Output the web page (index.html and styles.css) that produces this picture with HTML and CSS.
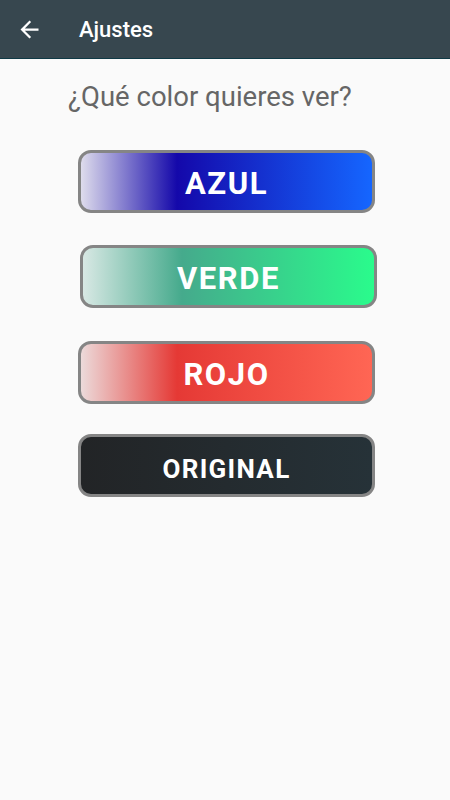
FILE: index.html
```html
<!DOCTYPE html>
<html lang="es">
<head>
  <meta charset="UTF-8" />
  <meta name="viewport" content="width=device-width, initial-scale=1.0" />
  <title>Ajustes</title>
  <link rel="stylesheet" href="styles.css">
</head>
<body>
  <header class="toolbar">
    <button class="back" aria-label="Volver">
      <svg viewBox="0 0 24 24" width="27" height="27">
        <path fill="#fff" d="M20 11H7.83l5.59-5.59L12 4l-8 8 8 8 1.41-1.41L7.83 13H20v-2z"/>
      </svg>
    </button>
    <h1 class="title">Ajustes</h1>
  </header>

  <p class="question">¿Qué color quieres ver?</p>

  <div class="options">
    <button class="option azul">AZUL</button>
    <button class="option verde">VERDE</button>
    <button class="option rojo">ROJO</button>
    <button class="option original">ORIGINAL</button>
  </div>
</body>
</html>
```

FILE: styles.css
```css
body {
  margin: 0;
  font-family: Roboto, "Liberation Sans", sans-serif;
  background-color: #fafafa;
  color: #333;
}

.toolbar {
  display: flex;
  align-items: center;
  height: 58px;
  padding-left: 16px;
  background-color: #37474f;
  border-bottom: 1px solid #0f3a46;
}

.back {
  display: flex;
  padding: 0;
  border: none;
  background: transparent;
  cursor: pointer;
}

.title {
  margin: 0 0 0 36px;
  font-size: 22px;
  font-weight: 500;
  color: #fff;
}

.question {
  margin: 0;
  padding: 22px 0 0 68px;
  font-size: 27.5px;
  line-height: 32px;
  color: #666;
}

.options {
  display: flex;
  flex-direction: column;
  align-items: center;
  gap: 32px;
  margin-top: 37px;
  padding-left: 3px;
}

.option {
  width: 297px;
  height: 63px;
  box-sizing: border-box;
  padding-top: 4px;
  border: 3px solid #858585;
  border-radius: 13px;
  font-family: Roboto, "Liberation Sans", sans-serif;
  font-size: 31px;
  font-weight: bold;
  letter-spacing: 0.05em;
  color: #fff;
  cursor: pointer;
}

.azul {
  background: linear-gradient(to right, #dedcec 0%, #1408aa 33%, #1566ff 100%);
}

.verde {
  margin-left: 4px;
  background: linear-gradient(to right, #d8e8e4 0%, #45aa8c 34%, #2afb8c 100%);
}

.rojo {
  margin-top: 1px;
  background: linear-gradient(to right, #ecdada 0%, #e53935 33%, #ff6654 100%);
}

.original {
  margin-top: -2px;
  padding-top: 8px;
  font-size: 26px;
  background: linear-gradient(to right, #222426 0%, #263238 100%);
}
```
